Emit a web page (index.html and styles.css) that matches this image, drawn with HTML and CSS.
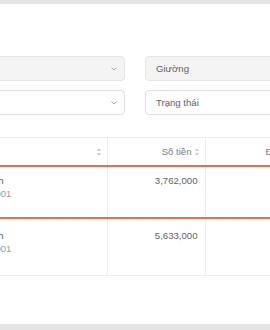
FILE: index.html
```html
<!DOCTYPE html>
<html lang="vi">
<head>
    <meta charset="UTF-8">
    <meta name="viewport" content="width=device-width, initial-scale=1.0">
    <title>Hoá đơn</title>
    <link rel="stylesheet" href="styles.css">
</head>
<body>
    <div class="page">
        <div class="content">
            <div class="filters">
                <div class="select is-disabled">
                    <span class="value">Phòng</span>
                    <svg class="chevron" width="6" height="4" viewBox="0 0 6 4"><path d="M0.5 0.5 L3 3 L5.5 0.5" fill="none" stroke="#a8abb2" stroke-width="1"/></svg>
                </div>
                <div class="select is-disabled">
                    <span class="value">Giường</span>
                    <svg class="chevron" width="6" height="4" viewBox="0 0 6 4"><path d="M0.5 0.5 L3 3 L5.5 0.5" fill="none" stroke="#a8abb2" stroke-width="1"/></svg>
                </div>
                <div class="select">
                    <span class="value">Khu</span>
                    <svg class="chevron" width="6" height="4" viewBox="0 0 6 4"><path d="M0.5 0.5 L3 3 L5.5 0.5" fill="none" stroke="#a8abb2" stroke-width="1"/></svg>
                </div>
                <div class="select">
                    <span class="value">Trạng thái</span>
                    <svg class="chevron" width="6" height="4" viewBox="0 0 6 4"><path d="M0.5 0.5 L3 3 L5.5 0.5" fill="none" stroke="#a8abb2" stroke-width="1"/></svg>
                </div>
            </div>

            <table class="bills">
                <colgroup>
                    <col class="col-name">
                    <col class="col-amount">
                    <col class="col-status">
                </colgroup>
                <thead>
                    <tr>
                        <th class="th-name"><span>Khách</span><i class="sort"></i></th>
                        <th class="th-amount"><span>Số tiền</span><i class="sort"></i></th>
                        <th class="th-status">Đã thanh toán</th>
                    </tr>
                </thead>
                <tbody>
                    <tr class="is-current">
                        <td>
                            <div class="name">Nguyễn Thị Thanh</div>
                            <div class="code">Mã HĐ: HD2301001</div>
                        </td>
                        <td class="amount">3,762,000</td>
                        <td></td>
                    </tr>
                    <tr class="tall">
                        <td>
                            <div class="name">Nguyễn Thị Thanh</div>
                            <div class="code">Mã HĐ: HD2302001</div>
                        </td>
                        <td class="amount">5,633,000</td>
                        <td></td>
                    </tr>
                </tbody>
            </table>
        </div>
    </div>
</body>
</html>
```

FILE: styles.css
```css
* {
    box-sizing: border-box;
}
body {
    margin: 0;
    width: 270px;
    height: 330px;
    overflow: hidden;
    background-color: #e4e4e4;
    font-family: "Liberation Sans", Arial, sans-serif;
    font-size: 9.6px;
    color: #606266;
}
.page {
    margin-top: 4px;
    height: 320px;
    background: white;
    overflow: hidden;
}
.content {
    width: 600px;
    margin-left: -85px;
    padding-top: 52px;
}
.filters {
    display: grid;
    grid-template-columns: 210px 325px;
    column-gap: 20px;
    row-gap: 9px;
}
.select {
    height: 25px;
    display: flex;
    align-items: center;
    justify-content: space-between;
    padding: 0 7px 0 10px;
    border: 1px solid #dcdfe6;
    border-radius: 4px;
    background: white;
}
.select.is-disabled {
    background-color: #f4f4f5;
    border-color: #e4e5e8;
}
.chevron {
    display: block;
}

.bills {
    margin-top: 22px;
    width: 520px;
    border-collapse: collapse;
    table-layout: fixed;
    border-top: 1px solid #ebeef5;
}
.col-name {
    width: 192px;
}
.col-amount {
    width: 98px;
}
th, td {
    border-right: 1px solid #ebeef5;
    border-bottom: 1px solid #ebeef5;
    padding: 0;
}
th {
    height: 28px;
    font-weight: normal;
    color: #7b7e84;
}
.th-name, .th-amount {
    padding-right: 5px;
}
.th-name {
    padding-left: 10px;
}
.th-name span {
    float: left;
    line-height: 27px;
}
.th-name .sort {
    float: right;
    margin-top: 10px;
}
.th-amount {
    text-align: right;
}
.th-status {
    padding-left: 60px;
    text-align: left;
}
.sort {
    display: inline-block;
    vertical-align: middle;
    width: 5px;
    height: 8px;
    margin-left: 3px;
    position: relative;
}
.sort::before, .sort::after {
    content: "";
    position: absolute;
    left: 0;
    border-left: 2.5px solid transparent;
    border-right: 2.5px solid transparent;
}
.sort::before {
    top: 0;
    border-bottom: 3px solid #c8cbd1;
}
.sort::after {
    bottom: 0;
    border-top: 3px solid #c8cbd1;
}

td {
    vertical-align: top;
    padding: 7px 7px 0 10px;
    line-height: 13px;
}
tr.is-current td {
    height: 52px;
    border-top: 2px solid #f6694e;
    border-bottom: 2px solid #f6694e;
}
tr.tall td {
    height: 57px;
    padding-top: 10px;
}
.name {
    color: #555a61;
}
.code {
    color: #9a9da2;
}
td.amount {
    text-align: right;
}
```
